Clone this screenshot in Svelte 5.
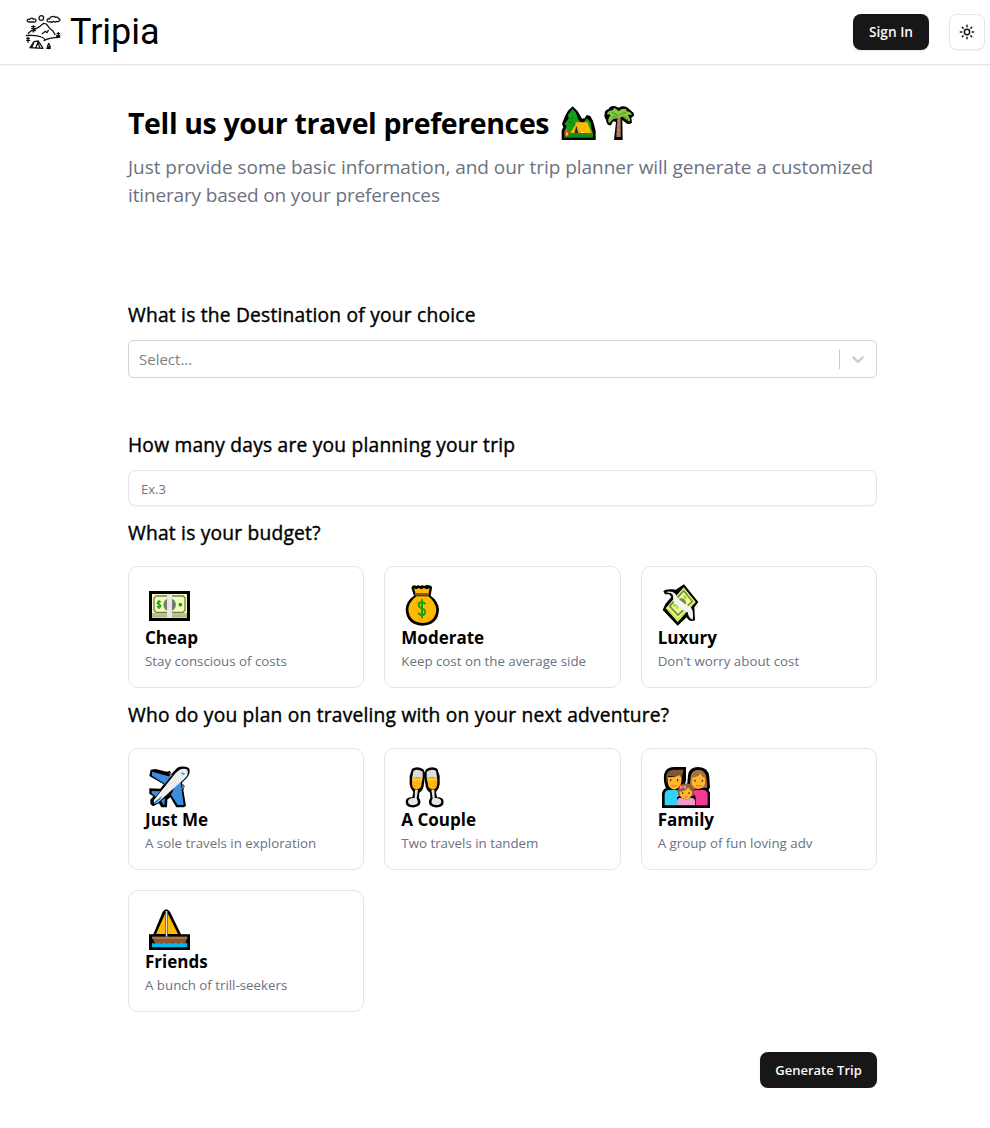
<script>
  let destination = $state('');
  let days = $state('');
  const budgets = [
    { icon: 'cash', title: 'Cheap', text: 'Stay conscious of costs' },
    { icon: 'bag', title: 'Moderate', text: 'Keep cost on the average side' },
    { icon: 'wings', title: 'Luxury', text: "Don't worry about cost" }
  ];
  const parties = [
    { icon: 'plane', title: 'Just Me', text: 'A sole travels in exploration' },
    { icon: 'glasses', title: 'A Couple', text: 'Two travels in tandem' },
    { icon: 'family', title: 'Family', text: 'A group of fun loving adv' },
    { icon: 'boat', title: 'Friends', text: 'A bunch of trill-seekers' }
  ];
</script>

{#snippet glass()}
  <path d="M48 20Q64 10 82 22L88 35L83 73Q80 87 70 92L69 108Q77 119 70 130Q57 140 39 134Q26 130 30 114Q35 104 49 106L52 90Q42 80 41 67V42Z" fill="#000" />
  <path d="M52 27Q64 18 80 29L80 45H49Z" fill="#ddd" />
  <path d="M49 45Q65 48 80 44L75 75Q68 84 58 82Q48 79 48 63Z" fill="#ffae14" />
  <path d="M49 45Q65 48 80 44L78 57Q63 61 48 56Z" fill="#ffc42b" />
  <path d="M57 83L56 108Q37 107 36 119Q37 129 53 129Q68 127 65 116L62 109L66 83Z" fill="#e6e6e6" />
  <path d="M65 61v2M60 67v2M65 73v2" stroke="#fff4aa" stroke-width="3" />
{/snippet}

{#snippet picture(name)}
  <svg class="emoji" viewBox="15 9 165 120" aria-hidden="true">
    {#if name === 'cash'}
      <path d="M27 33H150V123H27Z" fill="#000" />
      <path d="M36 42H141V114H36Z" fill="#f3ffae" />
      <path d="M36 102H141V114H36Z" fill="#c9d58c" />
      <path d="M36 101H141M36 108H141" stroke="#858b70" stroke-width="2" />
      <path d="M48 48H130L135 54V91L129 97H48L42 91V54Z" fill="none" stroke="#777" stroke-width="4" />
      <circle cx="89" cy="74" r="19" fill="#777" />
      <path d="M63 66Q58 62 53 66Q49 71 57 73Q65 76 61 81Q56 84 51 79M57 60V87" fill="none" stroke="#16a016" stroke-width="4" />
      <circle cx="121" cy="74" r="5.5" fill="#16a016" />
      <path d="M81 42H96V114H81Z" fill="#e6e6e6" />
    {:else if name === 'bag'}
      <path d="M49 18Q55 14 61 18Q67 14 73 18Q79 14 85 18Q91 14 98 16Q108 16 108 24L104 47Q127 63 129 89Q127 135 78 137Q31 133 29 89Q30 63 54 47L46 23Z" fill="#000" />
      <path d="M54 25L61 28L68 24L76 28L84 24L92 28L101 24L98 39H58ZM61 49H97Q119 66 121 89Q118 128 78 129Q39 126 37 88Q38 67 61 49Z" fill="#ffb900" />
      <path d="M57 39H99V47H57Z" fill="#8e562e" />
      <path d="M88 73Q84 66 78 66Q68 66 68 75Q68 82 78 85Q89 89 87 98Q85 106 77 105Q70 105 67 98M78 58V115" fill="none" stroke="#16a016" stroke-width="6" />
    {:else if name === 'wings'}
      <path d="M34 34Q39 27 62 28L71 29L96 13L139 66L127 82L129 121Q112 128 104 112L77 137L32 90L40 72L58 51L52 43H39Z" fill="#000" />
      <path d="M95 22L131 66L77 126L41 85Z" fill="#dfff65" />
      <path d="M44 84L77 119L128 68" fill="none" stroke="#b0c964" stroke-width="3" />
      <path d="M95 32L121 64L78 105L53 79Z" fill="#e8ff84" stroke="#7b8257" stroke-width="5" />
      <circle cx="88" cy="69" r="14" fill="#7b8257" />
      <path d="M94 49q9 0 6 8M67 80q-3-6 5-5q8 5 2 11" fill="none" stroke="#8bce36" stroke-width="5" />
      <path d="M40 36Q60 32 70 41Q76 60 116 82Q126 94 122 119Q110 117 107 97Q80 87 63 63Q66 45 57 40Z" fill="#f2f2f2" />
    {:else if name === 'plane'}
      <path d="M32 23L46 21L81 29L90 26L94 36L112 17Q128 10 147 18Q153 33 141 47L125 63L134 72L130 84L138 132L131 136H109L91 106L82 113L81 136H64L57 124L39 133L31 126V113L40 103L28 95V79L61 80L71 67L28 42Z" fill="#000" />
      <path d="M36 29L91 44L75 66L36 41ZM35 87L61 88L47 104L35 94ZM75 109L73 131L63 116ZM104 75L122 60L131 129H113L93 98Z" fill="#3b8de0" />
      <path d="M89 33L94 40L86 46M127 67L130 75L124 81" fill="none" stroke="#777" stroke-width="5" />
      <path d="M42 114L107 33Q125 14 142 23Q148 37 132 52L53 122Q38 130 42 114Z" fill="#eee" />
      <path d="M42 121L67 101L61 112L45 127Z" fill="#257cd2" />
      <path d="M121 36l6-5q7 0 8 5l-5 4q-3-4-9-4" fill="#25c4f4" />
    {:else if name === 'glasses'}
      <g>{@render glass()}</g>
      <g transform="translate(172 0) scale(-1 1)">{@render glass()}</g>
    {:else if name === 'family'}
      <path d="M30 138V97Q30 83 42 78Q34 64 36 38Q40 15 66 15H102V56Q99 64 98 68L105 71L108 40Q111 15 139 15Q169 15 172 45L174 77Q166 83 174 91V138Z" fill="#000" />
      <path d="M38 130V98Q38 84 53 84H76L83 101L75 106V130Z" fill="#31d2f6" />
      <path d="M131 130V105L121 91L127 84H153Q167 84 167 98V130Z" fill="#f03a93" />
      <path d="M43 64V44Q45 22 67 23H95L90 43L88 61L82 43H48Z" fill="#805637" />
      <path d="M47 45Q69 47 83 40L88 48V61Q84 81 66 83Q49 80 47 61Z" fill="#ffb82e" />
      <path d="M113 78L116 42Q121 23 139 23Q159 24 163 45L166 77H150L122 83Z" fill="#aa6d40" />
      <path d="M119 47Q140 46 146 34Q148 45 159 48V63Q156 79 140 81Q120 77 119 63Z" fill="#ffb82e" />
      <path d="M78 100V82Q82 64 104 64Q123 67 125 83V103Z" fill="#90603a" />
      <path d="M83 89Q101 88 109 76Q113 85 120 88V97Q116 112 102 112Q84 109 83 97Z" fill="#ffb52f" />
      <path d="M75 130V116Q78 105 91 108Q103 116 113 108Q128 105 129 118V130Z" fill="#f19aca" />
      <path d="M84 69l9 5 9-5v12l-9-5-9 5z" fill="#ff82bb" />
      <path d="M56 52v6M77 52v6M129 53v6M151 53v6M92 91v5M111 91v5" stroke="#332719" stroke-width="3.5" />
      <path d="M58 70q8 6 16 0M132 70q8 5 16 0M97 103q5 4 10 0" fill="none" stroke="#e45b1f" stroke-width="2.5" />
    {:else}
      <path d="M27 91H40L68 23Q79 8 90 23L123 91H150V138H27Z" fill="#000" />
      <path d="M48 90L76 28V90ZM83 28L114 90H83Z" fill="#ffb900" />
      <path d="M77 21H82V98H77Z" fill="#dedede" />
      <path d="M36 98H142L136 120H45Z" fill="#8e562e" />
      <path d="M36 98H142V105H37Z" fill="#aa7650" />
      <path d="M36 117L46 119L55 116L63 120L72 116L80 120L89 116L98 120L106 116L115 120L124 116L132 119L142 117V130H36Z" fill="#00bcf2" />
    {/if}
  </svg>
{/snippet}

{#snippet choices(items)}
  <div class="cards">
    {#each items as item}
      <article class="card">
        {@render picture(item.icon)}
        <h3>{item.title}</h3>
        <p>{item.text}</p>
      </article>
    {/each}
  </div>
{/snippet}

<header>
  <div class="brand">
    <svg class="logo" viewBox="30 27 108 108" fill="none" stroke="#111" stroke-width="3.8" stroke-linecap="round" stroke-linejoin="round" aria-hidden="true">
      <path d="M42 51q-7-1-5-6q3-4 7-2q6-7 11-1q8-1 8 5q-1 5-6 4zM101 51q-7-2-4-8q3-3 7-1q1-8 9-7q5-2 8 2q8-3 9 4q7 1 4 6q-4 5-10 2q-4 4-8 0q-6 5-9 1z" />
      <circle cx="79" cy="39" r="7" />
      <path d="M40 85L48 78L56 75L75 64L86 55L94 57L104 70L113 77L120 89M82 86L91 79L96 83L100 76M35 92Q65 89 79 96Q91 101 89 106M134 97Q99 98 87 107M34 91H48M124 96H134M55 62v19M50 65h10M50 71h11M49 77h12M39 97v15M35 100h8M35 106h9M130 82v14M126 86h8M125 92h9M45 128L57 110L70 108L84 130ZM57 110L50 129M70 109L62 130M70 115L75 130M95 130H106M101 115L97 126H106ZM101 126v5" />
    </svg>
    <span>Tripia</span>
  </div>
  <div class="actions">
    <button class="dark sign">Sign In</button>
    <button class="theme" aria-label="Toggle theme">
      <svg width="16" height="16" viewBox="0 0 24 24" fill="none" stroke="#111" stroke-width="2.2" stroke-linecap="round"><circle cx="12" cy="12" r="4" /><path d="M12 2v2M12 20v2M4.9 4.9l1.4 1.4M17.7 17.7l1.4 1.4M2 12h2M20 12h2M6.3 17.7l-1.4 1.4M19.1 4.9l-1.4 1.4" /></svg>
    </button>
  </div>
</header>

<main>
  <h1>
    <span>Tell us your travel preferences</span>
    <svg width="80" height="36" viewBox="30 21 240 108" aria-hidden="true">
      <path d="M35 126V97L40 88L36 77L45 55L54 38L68 25L83 40L96 62L104 61L110 51L121 54L129 69L134 87L137 99V126Z" fill="#000" />
      <path d="M43 104L50 84L43 78L56 62L54 50L68 33L78 44L84 64L94 74L91 105ZM99 75L111 61L121 72L125 94L129 104H103Z" fill="#16a016" />
      <path d="M61 64L70 58M56 75L68 70M68 83L77 76" stroke="#086c20" stroke-width="3" />
      <path d="M43 105H129V119H43Z" fill="#10911b" />
      <path d="M77 73H112L125 105H61L76 80Z" fill="#ffb900" />
      <path d="M78 79L71 105H94Z" fill="#e0a019" /><path d="M79 84L74 105H84Z" fill="#15232b" />
      <path d="M45 107Q41 97 49 92Q60 101 56 111L48 117Z" fill="#f34a23" /><path d="M51 101Q57 110 49 114Q45 108 51 101Z" fill="#ffdb3f" />
      <path d="M93 103h8" stroke="#fff4bf" stroke-width="3" />
      <path d="M164 49Q163 36 176 33Q181 22 196 25L206 29Q220 21 233 29L251 45L252 53L244 59L246 74Q235 82 227 74L217 66L218 126H192L198 72L189 70L183 82Q170 84 168 66Q161 55 164 49Z" fill="#000" />
      <path d="M202 58H212V117H199Z" fill="#a87558" />
      <path d="M202 66L211 70M201 80L211 84M200 94L211 98M200 107L211 111" stroke="#c29b7e" stroke-width="2" />
      <path d="M170 49Q176 35 190 37Q186 31 196 31L206 39Q218 29 230 34Q227 37 230 40Q241 39 246 51Q236 49 233 52Q242 61 239 71L217 56L203 61L190 63L177 76Q170 65 182 52Q177 47 170 49Z" fill="#8cc63e" />
      <path d="M185 43Q197 46 204 54M209 52Q217 43 228 45M186 60Q191 53 201 57M217 55Q229 55 235 67" fill="none" stroke="#4fa52a" stroke-width="4" />
    </svg>
  </h1>
  <p class="intro">Just provide some basic information, and our trip planner will generate a customized<br /><span>itinerary based on your preferences</span></p>

  <h2 class="q1">What is the Destination of your choice</h2>
  <div class="select">
    <input bind:value={destination} placeholder="Select..." aria-label="Destination" />
    <i></i>
    <svg width="20" height="20" viewBox="0 0 20 20" fill="#ccc"><path d="M4.516 7.548c.436-.446 1.043-.481 1.576 0L10 11.295l3.908-3.747c.533-.481 1.141-.446 1.574 0 .436.445.408 1.197 0 1.615-.406.418-4.695 4.502-4.695 4.502a1.095 1.095 0 0 1-1.576 0S4.924 9.581 4.516 9.163c-.409-.418-.436-1.17 0-1.615z" /></svg>
  </div>

  <h2 class="q2">How many days are you planning your trip</h2>
  <input class="days" bind:value={days} placeholder="Ex.3" aria-label="Days" />

  <h2 class="q3">What is your budget?</h2>
  {@render choices(budgets)}
  <h2 class="q4">Who do you plan on traveling with on your next adventure?</h2>
  {@render choices(parties)}
  <footer><button class="dark generate">Generate Trip</button></footer>
</main>

<style>
  :global(body) { margin: 0; background: #fff; color: #000; font-family: "Open Sans", "Noto Sans", sans-serif; }
  * { box-sizing: border-box; }
  h1, h2, h3, p { margin: 0; }
  button, input { font-family: inherit; }
  header { height: 65px; padding: 0 5px 0 25px; display: flex; align-items: center; justify-content: space-between; border-bottom: 1px solid #e5e5e5; box-shadow: 0 1px 2px #0000000d; }
  .brand { display: flex; align-items: center; gap: 9px; font: 400 36px/42px Roboto, sans-serif; }
  .logo { width: 36px; height: 36px; }
  .actions { display: flex; gap: 20px; }
  button { border: 0; padding: 0 0 1px; height: 36px; border-radius: 8px; }
  .dark { background: #171717; color: #fafafa; font-size: 13px; font-weight: 600; box-shadow: 0 1px 2px #0000001a; }
  .sign { width: 76px; font-size: 13.7px; }
  .theme { width: 36px; padding: 0; display: grid; place-items: center; background: #fff; border: 1px solid #e5e5e5; box-shadow: 0 1px 2px #0000000d; }
  main { margin: 40px 113px 0 128px; }
  h1 { display: flex; align-items: center; gap: 10px; height: 36px; font-size: 28.5px; line-height: 36px; font-weight: 700; letter-spacing: -.38px; white-space: nowrap; }
  h1 span { width: 422px; }
  h1 svg, .emoji { overflow: visible; flex: none; }
  .intro { margin-top: 12px; color: #6b7280; font-size: 19px; line-height: 28px; letter-spacing: -.03px; white-space: nowrap; }
  .intro span { letter-spacing: -.15px; }
  h2 { font-size: 19.2px; line-height: 28px; font-weight: 400; letter-spacing: .22px; -webkit-text-stroke: .4px #000; white-space: nowrap; }
  .q1 { margin-top: 92px; }
  .q2 { margin-top: 53px; }
  .q3 { margin-top: 13px; }
  .q4 { margin-top: 13px; }
  .select { margin-top: 11px; height: 38px; display: flex; align-items: center; border: 1px solid #d4d4d8; border-radius: 5px; padding-right: 8px; }
  .select input { flex: 1; border: 0; outline: 0; padding: 0 10px; background: none; font-size: 15px; }
  .select input::placeholder { color: #808080; opacity: 1; }
  .select i { width: 1px; height: 20px; background: #ccc; margin-right: 8px; }
  .days { display: block; width: 100%; height: 36px; margin-top: 11px; padding: 2px 12px 0; border: 1px solid #e5e5e5; border-radius: 8px; font-size: 13px; box-shadow: 0 1px 2px #0000000d; outline: 0; }
  .days::placeholder { color: #737373; opacity: 1; }
  .cards { display: grid; grid-template-columns: repeat(3, 1fr); gap: 20px; margin-top: 19px; }
  .card { height: 122px; padding: 16px; border: 1px solid #e5e5e5; border-radius: 10px; white-space: nowrap; }
  .emoji { display: block; width: 55px; height: 40px; }
  .card:nth-child(3n) .emoji { margin-left: -.67px; }
  h3 { padding-top: 1px; margin-bottom: -1px; font-size: 17px; line-height: 28px; font-weight: 700; }
  .card p { color: #6b7280; font-size: 13.3px; line-height: 20px; }
  footer { display: flex; justify-content: flex-end; margin-top: 40px; }
  .generate { width: 117px; }
</style>
